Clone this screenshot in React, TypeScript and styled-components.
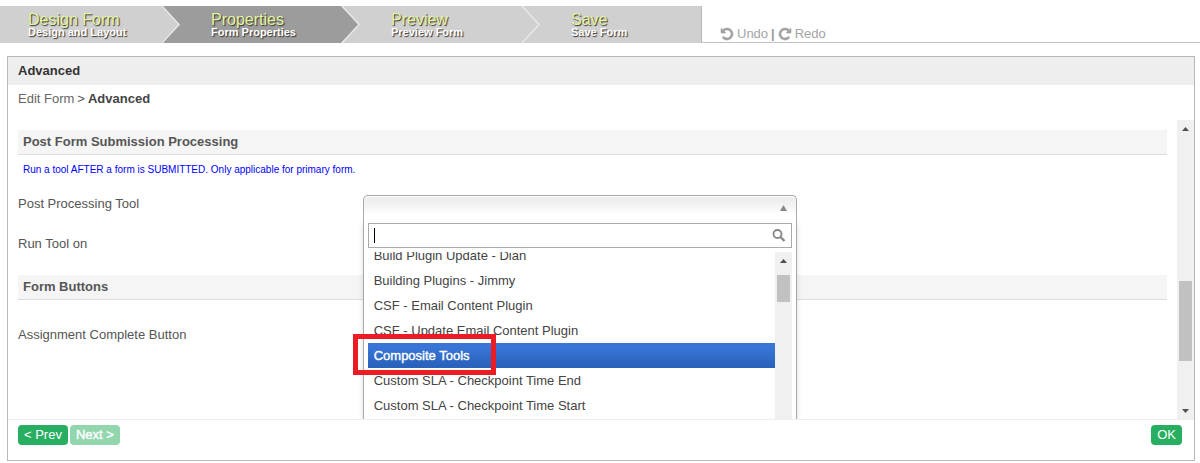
import React from 'react';
import styled, { createGlobalStyle, css } from 'styled-components';

const GlobalStyle = createGlobalStyle`
  *, *::before, *::after { box-sizing: border-box; }
  body {
    margin: 0;
    background: #fff;
    color: #555;
    font: 13px/16px "Liberation Sans", Arial, sans-serif;
  }
  button, input { font: inherit; }
`;

const Page = styled.div`
  padding-top: 6px;
`;

const TopBar = styled.header`
  display: flex;
  height: 37px;
`;

const Steps = styled.nav`
  display: flex;
  width: 702px;
  border-right: 1px solid #b8b8b8;
`;

const StepLink = styled.a<{ $current?: boolean }>`
  position: relative;
  flex: 0 0 180px;
  padding: 6px 0 0 31px;
  background: ${(p) => (p.$current ? '#9c9c9c' : '#d0d0d0')};
  color: #fff;
  text-decoration: none;
  text-shadow: 1px 1px 1px #333;

  &:first-child { padding-left: 28px; }
  &:last-child { flex: 1 1 auto; }
`;

const StepTitle = styled.span`
  display: block;
  color: #e3f5a1;
  font-size: 16px;
  line-height: 15px;
`;

const StepNote = styled.span`
  display: block;
  font-size: 11px;
  font-weight: bold;
  line-height: 11px;
`;

const Chevron = styled.svg`
  position: absolute;
  top: 0;
  right: 0;
`;

const History = styled.div`
  display: flex;
  flex: 1;
  align-items: flex-end;
  gap: 3px;
  padding: 0 0 0 18px;
  border-bottom: 1px solid #c4c4c4;
  color: #999;
`;

const HistoryButton = styled.button`
  display: flex;
  align-items: center;
  gap: 3px;
  padding: 0;
  border: 0;
  background: none;
  color: #a4a4a4;
`;

const Panel = styled.main`
  margin: 13px 5px 0 7px;
  border: 1px solid #b8b8b8;
`;

const PanelTitle = styled.h1`
  margin: 0;
  padding: 6px 10px;
  background: #eee;
  color: #333;
  font-size: 13px;
  line-height: 16px;
`;

const Breadcrumb = styled.nav`
  display: flex;
  gap: 3px;
  padding: 6px 10px 13px;

  a { color: #666; text-decoration: none; }
  strong { color: #444; }
`;

const ScrollArea = styled.div`
  display: flex;
  height: 299px;
  overflow: hidden;
`;

const Form = styled.form`
  flex: 1;
  padding: 10px 10px 0;
`;

const SectionTitle = styled.h2`
  margin: 0;
  padding: 4px 5px;
  border-bottom: 1px solid #ddd;
  background: #f5f5f5;
  font-size: 13px;
  line-height: 16px;
`;

const Hint = styled.p`
  margin: 0;
  padding: 7px 5px;
  color: #00f;
  font-size: 10px;
  line-height: 16px;
`;

const Field = styled.div`
  display: grid;
  grid-template-columns: 30% minmax(0, 434px);
  height: 40px;
  padding-top: 10px;
`;

const Section = styled.section`
  & + & { margin-top: 10px; }
  & + & > ${Field} { margin-top: 16px; }
`;

const Label = styled.label`
  padding-top: 1px;
  line-height: 16px;
`;

const Picker = styled.div`
  position: relative;
  height: 30px;
`;

const PickerButton = styled.button`
  display: flex;
  justify-content: flex-end;
  align-items: center;
  width: 100%;
  height: 25px;
  padding: 0 9px;
  border: 1px solid #aaa;
  border-bottom: 0;
  border-radius: 5px 5px 0 0;
  background: linear-gradient(#eee 20%, #fff 80%);
  box-shadow: 0 1px 0 #fff inset;
`;

const Dropdown = styled.div`
  position: absolute;
  top: 25px;
  left: 0;
  z-index: 2;
  width: 100%;
  height: 280px;
  padding: 3px 4px;
  border: 1px solid #aaa;
  border-top: 0;
  background: #fff;
  box-shadow: 0 4px 5px rgba(0, 0, 0, 0.15);
`;

const SearchBox = styled.div`
  display: flex;
  height: 25px;
  align-items: center;
  padding: 0 5px;
  border: 1px solid #aaa;
`;

const SearchInput = styled.input`
  flex: 1;
  min-width: 0;
  padding: 0;
  border: 0;
  outline: 0;
  background: none;
  caret-color: transparent;
`;

const Caret = styled.span`
  width: 1px;
  height: 15px;
  background: #000;
`;

const ListFrame = styled.div`
  display: flex;
  height: 240px;
  margin-top: 4px;
  overflow: hidden;
`;

const Options = styled.ul`
  flex: 1;
  margin: -9px 0 0;
  padding: 0;
  list-style: none;
`;

const Option = styled.li<{ $active?: boolean }>`
  padding: 5px 6px 4px;
  color: #444;
  line-height: 16px;
  ${(p) =>
    p.$active &&
    css`
      background: linear-gradient(#3875d7 20%, #2a62bc 90%);
      color: #fff;
      -webkit-text-stroke: 0.4px #fff;
    `}
`;

const Highlight = styled.div`
  position: absolute;
  top: 114px;
  left: -11px;
  width: 143px;
  height: 41px;
  border: 5px solid #ed1c24;
  pointer-events: none;
`;

const Track = styled.div`
  display: flex;
  flex: 0 0 17px;
  flex-direction: column;
  align-items: center;
  background: #f0f0f0;
`;

const Thumb = styled.div<{ $before: number; $size: number }>`
  width: 13px;
  height: ${(p) => p.$size}px;
  margin-top: ${(p) => p.$before}px;
  margin-bottom: auto;
  background: #c1c1c1;
`;

const Footer = styled.footer`
  display: flex;
  gap: 2px;
  padding: 5px 12px 15px 10px;
  border-top: 1px solid #eee;
`;

const Button = styled.button<{ $end?: boolean }>`
  height: 20px;
  padding: 0 6px;
  border: 0;
  border-radius: 4px;
  background: #27ae60;
  color: #fff;
  line-height: 20px;
  ${(p) => p.$end && css`margin-left: auto;`}

  &:disabled { opacity: 0.5; -webkit-text-stroke: 0.4px #fff; }
`;

const LIGHT = '#d0d0d0';
const DARK = '#9c9c9c';

const steps = [
  { title: 'Design Form', note: 'Design and Layout' },
  { title: 'Properties', note: 'Form Properties', current: true },
  { title: 'Preview', note: 'Preview Form' },
  { title: 'Save', note: 'Save Form' },
];

const tools = [
  'Build Plugin Update - Dian',
  'Building Plugins - Jimmy',
  'CSF - Email Content Plugin',
  'CSF - Update Email Content Plugin',
  'Composite Tools',
  'Custom SLA - Checkpoint Time End',
  'Custom SLA - Checkpoint Time Start',
];

function RotateIcon({ flipped }: { flipped?: boolean }) {
  return (
    <svg width="14" height="14" viewBox="0 0 1792 1792" fill="#a0a0a0" stroke="#a0a0a0" strokeWidth="80" aria-hidden="true">
      <path
        transform={flipped ? 'translate(1792 0) scale(-1 1)' : undefined}
        d="M1664 896q0 156-61 298t-164 245-245 164-298 61q-172 0-327-72.5t-264-204.5q-7-10-6.5-22.5t8.5-20.5l137-138q10-9 25-9 16 2 23 12 73 95 179 147t225 52q104 0 198.5-40.5t163.5-109.5 109.5-163.5 40.5-198.5-40.5-198.5-109.5-163.5-163.5-109.5-198.5-40.5q-98 0-188 35.5t-160 101.5l137 138q31 30 14 69-17 40-59 40h-448q-26 0-45-19t-19-45v-448q0-42 40-59 39-17 69 14l130 129q107-101 244.5-156.5t284.5-55.5q156 0 298 61t245 164 164 245 61 298z"
      />
    </svg>
  );
}

function Arrow({ down }: { down?: boolean }) {
  return (
    <svg width="17" height="17" viewBox="0 0 17 17" fill="#505050" aria-hidden="true">
      <path d={down ? 'M5 7h7l-3.500 4z' : 'M5 11h7l-3.500-4z'} />
    </svg>
  );
}

function Scrollbar({ before, size }: { before: number; size: number }) {
  return (
    <Track aria-hidden="true">
      <Arrow />
      <Thumb $before={before} $size={size} />
      <Arrow down />
    </Track>
  );
}

export default function App() {
  return (
    <Page>
      <GlobalStyle />
      <TopBar>
        <Steps aria-label="Form steps">
          {steps.map((s, i) => (
            <StepLink key={s.title} href="#" $current={s.current} aria-current={s.current ? 'step' : undefined}>
              <StepTitle>{s.title}</StepTitle>
              <StepNote>{s.note}</StepNote>
              {i < steps.length - 1 && (
                <Chevron width="19" height="37" viewBox="0 0 19 37" aria-hidden="true">
                  <path d="M0 0H19V37H0L18 18.500Z" fill={steps[i + 1].current ? DARK : LIGHT} />
                  <path d="M1 0L18 18.500L1 37" fill="none" stroke="#e8e8e8" strokeWidth="1.500" />
                </Chevron>
              )}
            </StepLink>
          ))}
        </Steps>
        <History>
          <HistoryButton type="button"><RotateIcon />Undo</HistoryButton>
          <b>|</b>
          <HistoryButton type="button"><RotateIcon flipped />Redo</HistoryButton>
        </History>
      </TopBar>

      <Panel>
        <PanelTitle>Advanced</PanelTitle>
        <Breadcrumb aria-label="Breadcrumb">
          <a href="#">Edit Form</a>
          <span>&gt;</span>
          <strong>Advanced</strong>
        </Breadcrumb>

        <ScrollArea>
          <Form>
            <Section>
              <SectionTitle>Post Form Submission Processing</SectionTitle>
              <Hint>Run a tool AFTER a form is SUBMITTED. Only applicable for primary form.</Hint>
              <Field>
                <Label htmlFor="tool">Post Processing Tool</Label>
                <Picker>
                  <PickerButton id="tool" type="button" aria-haspopup="listbox" aria-expanded="true">
                    <svg width="7" height="6" viewBox="0 0 7 6" fill="#888" aria-hidden="true">
                      <path d="M3.500 0L7 6H0z" />
                    </svg>
                  </PickerButton>
                  <Dropdown>
                    <SearchBox>
                      <Caret />
                      <SearchInput type="text" aria-label="Search tools" />
                      <svg width="14" height="14" viewBox="0 0 14 14" fill="none" stroke="#888" aria-hidden="true">
                        <circle cx="5.500" cy="5" r="4" strokeWidth="1.800" />
                        <path d="M8.500 8L12.500 12" strokeWidth="2.400" />
                      </svg>
                    </SearchBox>
                    <ListFrame>
                      <Options role="listbox" aria-label="Post Processing Tool">
                        {tools.map((t) => (
                          <Option key={t} role="option" $active={t === 'Composite Tools'} aria-selected={t === 'Composite Tools'}>
                            {t}
                          </Option>
                        ))}
                      </Options>
                      <Scrollbar before={6} size={27} />
                    </ListFrame>
                    <Highlight />
                  </Dropdown>
                </Picker>
              </Field>
              <Field>
                <Label as="span">Run Tool on</Label>
              </Field>
            </Section>
            <Section>
              <SectionTitle>Form Buttons</SectionTitle>
              <Field>
                <Label as="span">Assignment Complete Button</Label>
              </Field>
            </Section>
          </Form>
          <Scrollbar before={144} size={80} />
        </ScrollArea>

        <Footer>
          <Button type="button">&lt; Prev</Button>
          <Button type="button" disabled>Next &gt;</Button>
          <Button type="button" $end>OK</Button>
        </Footer>
      </Panel>
    </Page>
  );
}
